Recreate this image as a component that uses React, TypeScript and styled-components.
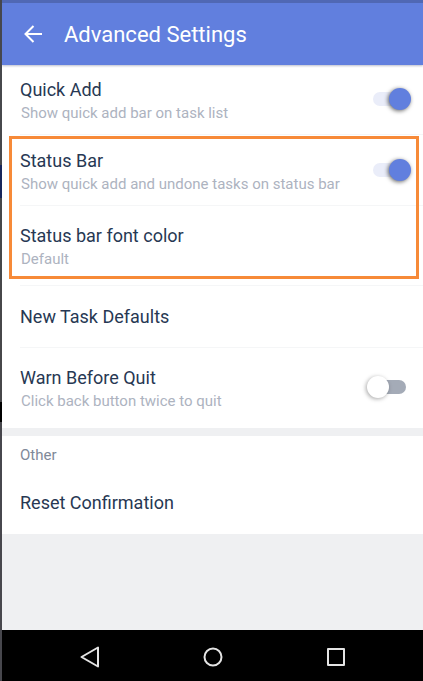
import React from "react";
import styled, { createGlobalStyle } from "styled-components";

const GlobalStyle = createGlobalStyle`
  *, *::before, *::after { box-sizing: border-box; }
  body { margin: 0; font-family: Roboto, sans-serif; background: #eff0f2; }
  button { font-family: inherit; border: 0; background: none; padding: 0; cursor: pointer; }
  h1, h2 { margin: 0; font-weight: 400; }
`;

const Page = styled.div`
  display: grid;
  grid-template-columns: 2px minmax(0, 1fr);
  min-height: 100vh;
`;

const Edge = styled.div`
  background: linear-gradient(
    #47484c 165px, #17265c 165px 198px, #47474a 198px 402px,
    #000 402px 422px, #47474d 422px
  );
`;

const Screen = styled.div`
  display: flex;
  flex-direction: column;
  background: #eff0f2;
`;

const Header = styled.header`
  display: flex;
  align-items: center;
  height: 65px;
  padding: 2px 20px 0;
  gap: 20px;
  border-top: 3px solid #5068b4;
  background: #617fde;
  color: #fff;
  box-shadow: 0 1px 2px rgba(60, 70, 110, 0.35);
  z-index: 1;
`;

const BackButton = styled.button`
  display: flex;
  padding-bottom: 2px;
  color: inherit;
`;

const Title = styled.h1`
  font-size: 22px;
  line-height: 28px;
`;

const Section = styled.section`
  background: #fff;
  & + & { margin-top: 8px; }
`;

const FirstSection = styled(Section)`
  margin-top: -1px;
`;

const Highlighted = styled.div`
  position: relative;
`;

const HighlightFrame = styled.div`
  position: absolute;
  inset: 1px 4px 7px 7px;
  border: 3px solid #f78a38;
  pointer-events: none;
`;

const Item = styled.div<{ $roomy?: boolean; $last?: boolean }>`
  margin-left: 18px;
  border-bottom: 1px solid ${(p) => (p.$last ? "transparent" : "#f5f6f7")};
  > * {
    display: flex;
    align-items: center;
    justify-content: space-between;
    width: 100%;
    text-align: left;
    padding: ${(p) => (p.$roomy ? "16px 12px 17px 0" : "12px 12px 12px 0")};
  }
`;

const SingleItem = styled(Item)`
  > * { padding: 17px 12px 16px 0; }
`;

const Texts = styled.span`
  display: flex;
  flex-direction: column;
`;

const Name = styled.span`
  font-size: 18px;
  line-height: 28px;
  color: #273853;
`;

const Note = styled.span`
  padding-left: 1px;
  font-size: 15px;
  line-height: 18px;
  color: #adb3bf;
`;

const SectionTitle = styled.h2`
  padding: 2px 0 0 18px;
  font-size: 15px;
  line-height: 34px;
  color: #7f8999;
`;

const Switch = styled.input`
  appearance: none;
  flex: none;
  display: grid;
  align-items: center;
  width: 44px;
  height: 22px;
  margin: 0;
  cursor: pointer;
  &::before, &::after { content: ""; grid-area: 1 / 1; }
  &::before {
    height: 14px;
    margin: 0 5px 0 6px;
    border-radius: 7px;
    background: #a4abb7;
  }
  &::after {
    width: 22px;
    height: 22px;
    border-radius: 50%;
    background: #fff;
    box-shadow: -1px 1px 4px rgba(0, 0, 0, 0.35);
  }
  &:checked::before { background: #eaedf9; }
  &:checked::after {
    justify-self: end;
    background: #617fde;
    box-shadow: -1px 1px 4px rgba(0, 0, 0, 0.6);
  }
`;

const NavBar = styled.nav`
  display: flex;
  align-items: center;
  justify-content: space-around;
  height: 51px;
  margin-top: auto;
  padding: 2px 25px 0 26px;
  background: #000;
`;

const NavButton = styled.button`
  display: flex;
  color: #e4e4e4;
`;

function Glyph({ children }: { children: React.ReactNode }) {
  return (
    <svg width="24" height="24" viewBox="0 0 24 24" fill="none" stroke="currentColor" strokeWidth="2" strokeLinejoin="round" aria-hidden="true">
      {children}
    </svg>
  );
}

interface ToggleProps {
  id: string;
  name: string;
  note: string;
  on?: boolean;
  roomy?: boolean;
  last?: boolean;
}

function ToggleItem({ id, name, note, on, roomy, last }: ToggleProps) {
  return (
    <Item $roomy={roomy} $last={last}>
      <label htmlFor={id}>
        <Texts>
          <Name>{name}</Name>
          <Note>{note}</Note>
        </Texts>
        <Switch id={id} type="checkbox" role="switch" defaultChecked={on} />
      </label>
    </Item>
  );
}

export default function App() {
  return (
    <Page>
      <GlobalStyle />
      <Edge />
      <Screen>
        <Header>
          <BackButton aria-label="Back">
            <svg width="22" height="22" viewBox="0 0 22 22" fill="none" stroke="currentColor" strokeWidth="2" aria-hidden="true">
              <path d="M20 11H4M11.5 3L3.5 11L11.5 19" />
            </svg>
          </BackButton>
          <Title>Advanced Settings</Title>
        </Header>
        <main>
          <FirstSection>
            <ToggleItem id="quick-add" name="Quick Add" note="Show quick add bar on task list" on />
            <Highlighted>
              <ToggleItem id="status-bar" name="Status Bar" note="Show quick add and undone tasks on status bar" on />
              <Item $roomy>
                <button>
                  <Texts>
                    <Name>Status bar font color</Name>
                    <Note>Default</Note>
                  </Texts>
                </button>
              </Item>
              <HighlightFrame />
            </Highlighted>
            <SingleItem>
              <button><Name>New Task Defaults</Name></button>
            </SingleItem>
            <ToggleItem id="warn-quit" name="Warn Before Quit" note="Click back button twice to quit" roomy last />
          </FirstSection>
          <Section>
            <SectionTitle>Other</SectionTitle>
            <SingleItem $last>
              <button><Name>Reset Confirmation</Name></button>
            </SingleItem>
          </Section>
        </main>
        <NavBar aria-label="System">
          <NavButton aria-label="Back"><Glyph><path d="M20 2.5V21.5L3.5 12Z" /></Glyph></NavButton>
          <NavButton aria-label="Home"><Glyph><circle cx="12" cy="12" r="8.5" /></Glyph></NavButton>
          <NavButton aria-label="Recent apps"><Glyph><rect x="4" y="4" width="16" height="16" /></Glyph></NavButton>
        </NavBar>
      </Screen>
    </Page>
  );
}
